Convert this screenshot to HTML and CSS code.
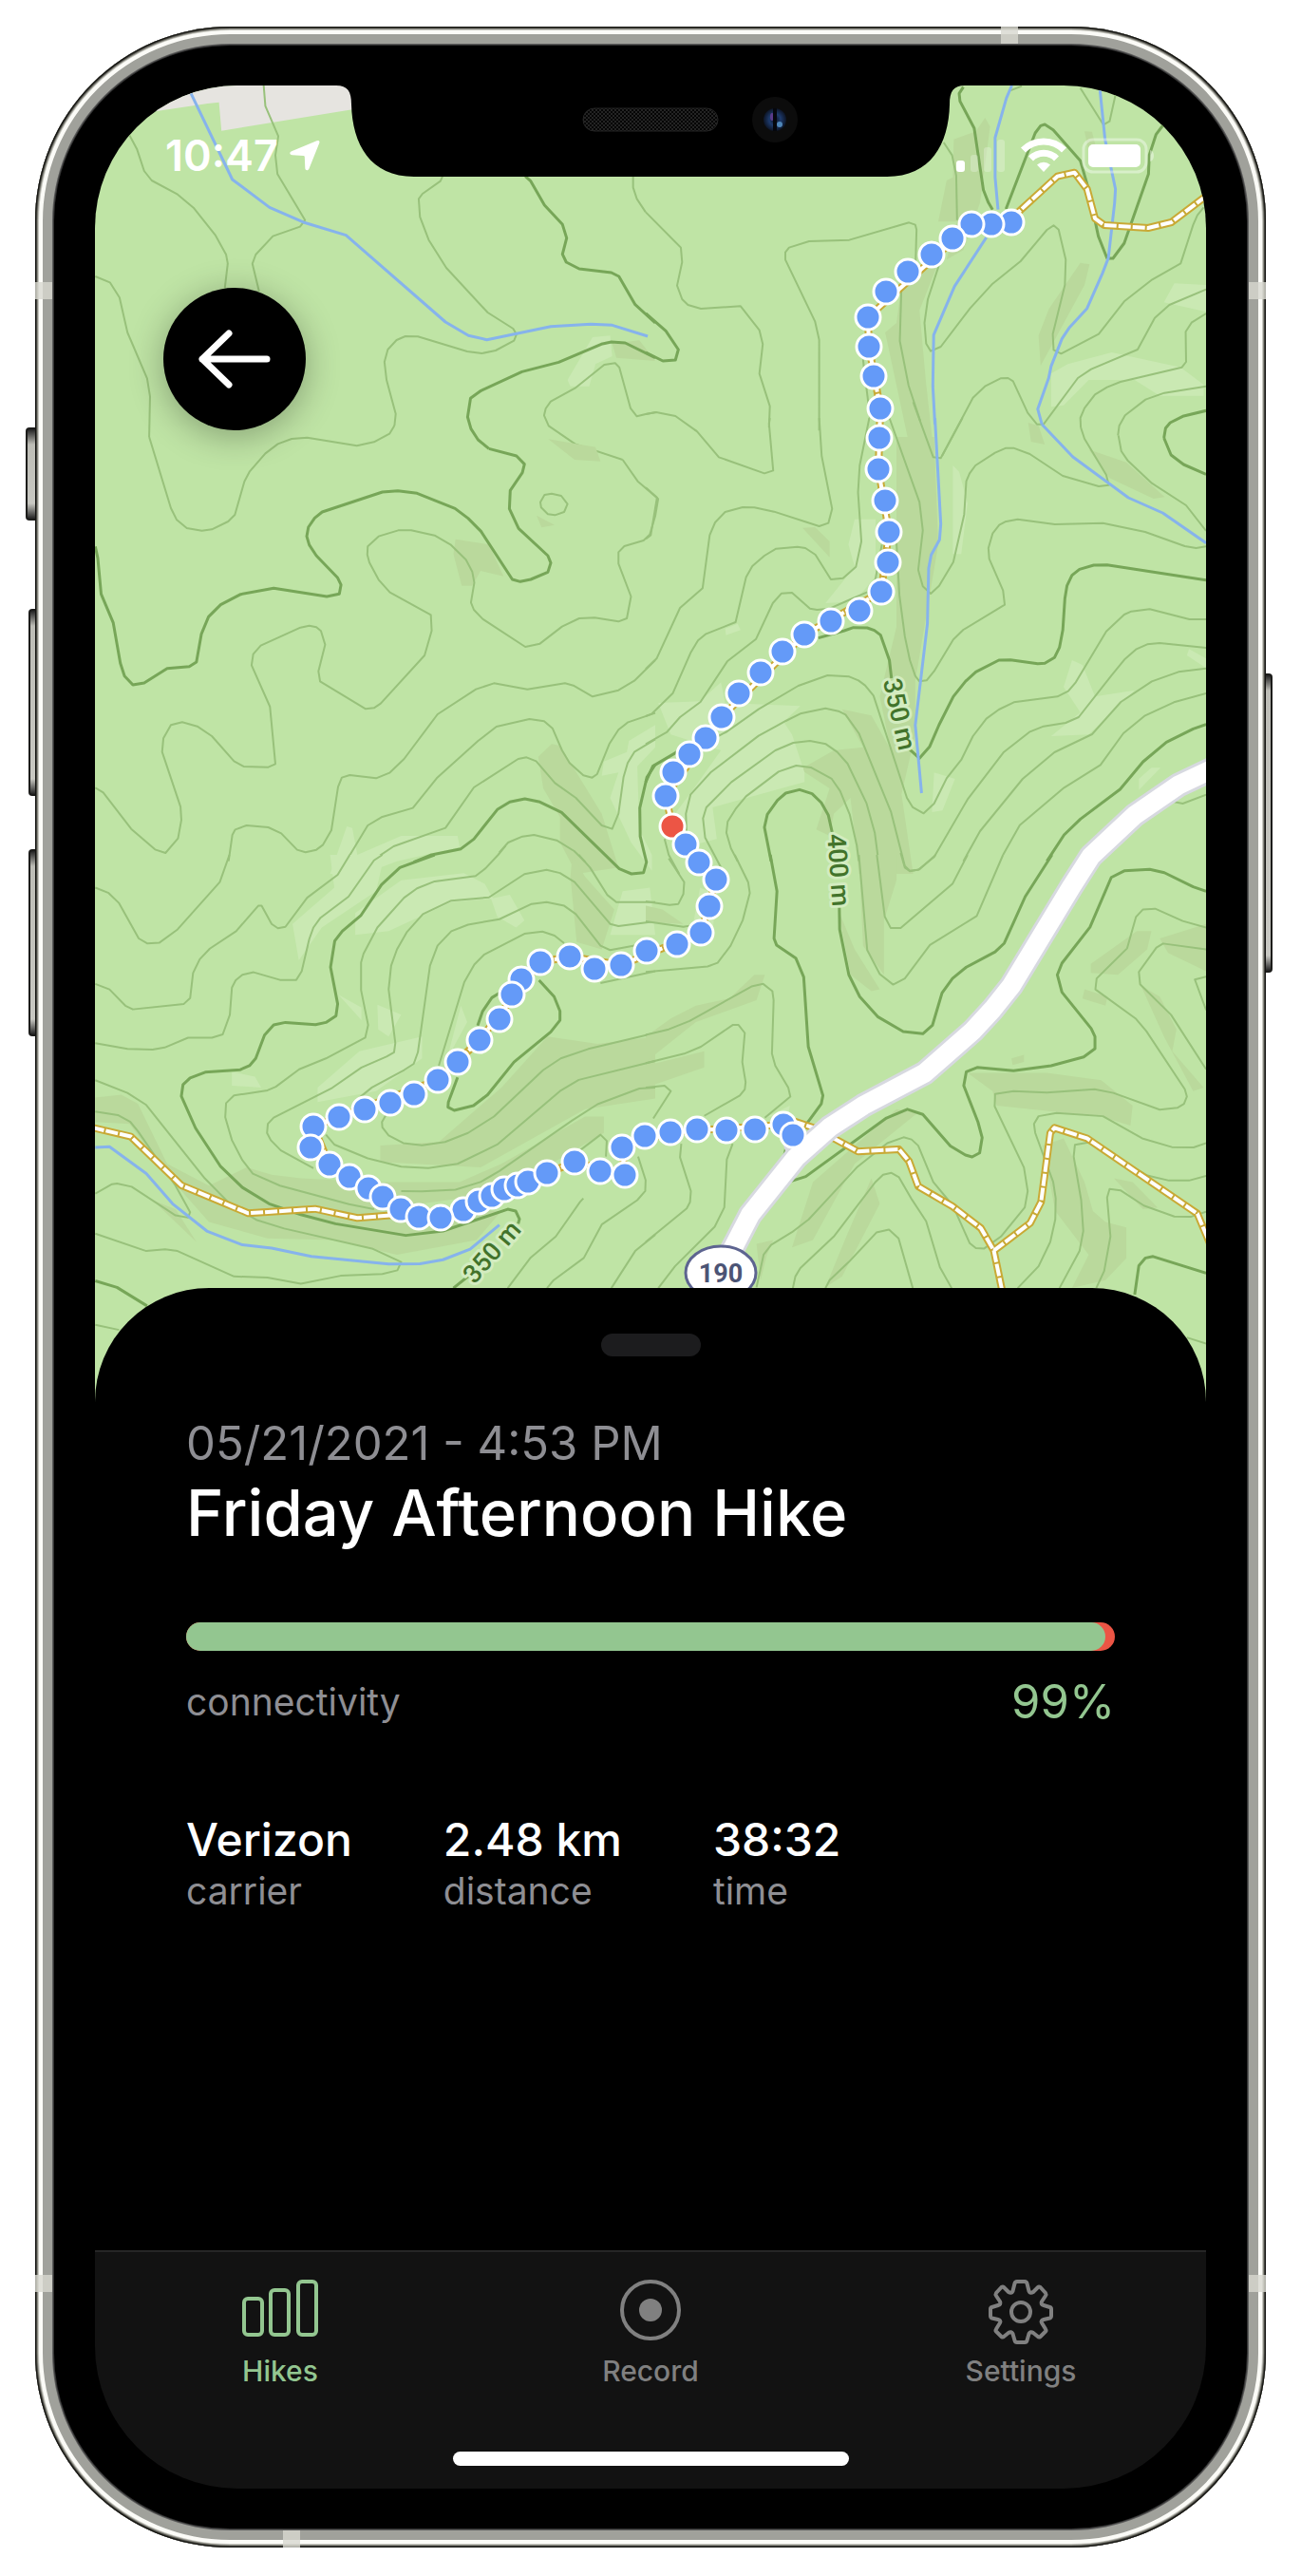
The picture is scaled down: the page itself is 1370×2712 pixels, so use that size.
FILE: index.html
```html
<!DOCTYPE html>
<html lang="en">
<head>
<meta charset="utf-8">
<meta name="viewport" content="width=device-width, initial-scale=1">
<title>Friday Afternoon Hike</title>
<link rel="stylesheet" href="styles.css">
</head>
<body>
<main class="phone">
  <span class="side-button side-button-mute"></span>
  <span class="side-button side-button-up"></span>
  <span class="side-button side-button-down"></span>
  <span class="side-button side-button-power"></span>
  <span class="band band-left-top"></span>
  <span class="band band-left-bottom"></span>
  <span class="band band-right-top"></span>
  <span class="band band-right-bottom"></span>
  <span class="band band-top"></span>
  <span class="band band-bottom"></span>

  <div class="screen">
    <header class="status-bar">
      <div class="status-time">
        <time>10:47</time>
        <svg width="32" height="34" viewBox="0 0 32 34" aria-label="Location in use"><path fill="#fff" d="M28.500 1.300C30.500 .2 32 1.500 31.300 3.600L20.500 30.500C19.500 33 16.500 32.800 16.300 30L15.800 18.200Q15.700 17.200 14.700 17.100L3 16.300C-.2 16 -.6 13.300 2 12.200Z"/></svg>
      </div>
      <svg class="notch" width="662" height="96" viewBox="0 0 662 96" aria-hidden="true">
        <defs>
          <pattern id="mesh" width="4" height="4" patternUnits="userSpaceOnUse"><rect width="4" height="4" fill="#050505"/><path d="M0 0L2 2L4 0M0 4L2 2L4 4" stroke="#242424" fill="none"/></pattern>
          <radialGradient id="lens"><stop offset="0" stop-color="#0b1020"/><stop offset=".5" stop-color="#1d3a6c"/><stop offset="1" stop-color="#0d1526"/></radialGradient>
        </defs>
        <path d="M0 0C12 0 16 6 16 20C17 62 36 96 82 96H580C626 96 645 62 646 20C646 6 650 0 662 0Z"/>
        <rect x="260" y="24" width="142" height="24" rx="12" fill="url(#mesh)" stroke="#252525"/>
        <circle cx="462" cy="36" r="24" fill="#0c0c0c"/>
        <circle cx="462" cy="36" r="12" fill="url(#lens)"/>
        <ellipse cx="459" cy="33" rx="2" ry="4" fill="#5a3a8a"/>
        <circle cx="467" cy="41" r="3" fill="#4f86b8"/>
        <path d="M462 24V48" stroke="#05070d" stroke-width="4"/>
      </svg>
      <svg class="status-icons" width="209" height="38" viewBox="0 0 209 38" aria-label="Signal, Wi-Fi, battery">
        <g fill="#fff">
          <rect y="24" width="9" height="12" rx="3"/>
          <g opacity=".25"><rect x="15" y="18" width="8" height="18" rx="3"/><rect x="29" y="10" width="8" height="26" rx="3"/><rect x="43" y="2" width="8" height="34" rx="3"/></g>
          <path d="M92 36L85 28.500A10 10 0 0 1 99 28.500Z"/>
          <rect x="139" y="7" width="55" height="24" rx="5"/>
          <path d="M204 13Q208 14 208 19Q208 24 204 25Z" opacity=".4"/>
        </g>
        <g fill="none" stroke="#fff">
          <path d="M70.500 13A30 30 0 0 1 113.500 13" stroke-width="7"/>
          <path d="M78.500 22A19 19 0 0 1 105.500 22" stroke-width="7"/>
          <rect x="134" y="2" width="66" height="34" rx="10" stroke-width="3" opacity=".4"/>
        </g>
      </svg>
    </header>

    <button class="back" type="button" aria-label="Back">
      <svg width="78" height="64" viewBox="0 0 78 64" fill="none" stroke="#fff" stroke-width="7" stroke-linecap="round" stroke-linejoin="round"><path d="M5 32H73M33 5L5 32L33 59"/></svg>
    </button>

    <svg class="map" viewBox="0 0 1170 1386" role="img" aria-label="Topographic map with the recorded route">
      <rect width="1170" height="1386" fill="#bfe4a5"/>

      <!-- north-west tile -->
      <g transform="translate(-100 -90) scale(.44005 .33333)">
        <path class="land" d="M340 358L497 327 524 323 530 413 850 344 850 260 340 260Z"/>
        <path class="lit" d="M1418 1065L1460 1060 1465 1125 1425 1150 1410 1220 1365 1220 1358 1200Z"/>
        <path class="shade" d="M1465 1085L1530 1075 1568 1140 1475 1130Z"/>
        <path class="minor" d="M307 420L328 472 345 540 363 570 425 614 463 656 515 742 541 804 545 832 538 910M631 270L635 335 666 430 659 490 664 550 730 695 718 716 653 746 612 804 604 833 620 920M228 873L263 892 286 940 305 1050 352 1195 359 1252 357 1380M1059 557L1054 572 1011 612 1002 628 1005 685 1026 758 1068 846 1167 987 1228 1038 1236 1056 1230 1076 1186 1107 1153 1116 1118 1110 1000 1063 970 1062 949 1074 928 1104 920 1143 925 1200 947 1307 944 1344M1515 557L1515 592 1524 628 1545 670M1570 1302L1545 1308 1524 1315 1509 1290 1482 1160 1472 1147 1446 1152 1376 1226 1318 1268 1306 1290 1302 1312 1313 1345 1376 1402 1490 1452"/>
        <path class="index" d="M1257 557L1270 572 1303 648 1346 709 1356 752 1346 803 1355 828 1386 849 1463 861 1481 873 1520 962 1568 1020M1568 1130L1496 1083 1463 1080 1439 1087 1337 1144 1249 1174 1151 1234 1126 1258 1119 1317 1127 1354 1144 1389 1170 1417"/>
        <path class="water" d="M457 295L556 567 645 655 726 702 828 743 1066 1017 1121 1060 1165 1073 1318 1031 1414 1024 1465 1027 1550 1062"/>
      </g>

      <!-- north-east tile -->
      <g transform="translate(580 -90) scale(.44005 .33333)">
        <path class="shade" d="M737 440L790 415 812 372 824 400 800 640 760 790 720 820 745 700 700 700 720 570 735 560ZM612 900L700 830 655 980 670 1200 690 1440 605 1440 628 1390 573 1050 600 1020ZM940 1060L965 975 1040 830 1062 835 1050 900 945 1155ZM915 1335L940 1345 955 1404 922 1395ZM1050 415L1068 416 1080 480 1060 480Z"/>
        <path class="lit" d="M970 1180L1010 1150 1115 1113 1280 1160 1335 1215 1335 1250 1230 1250 1170 1200 1060 1200 1000 1280 970 1285ZM1265 895L1341 900 1341 985 1240 955Z"/>
        <path class="minor" d="M0 670L84 782 87 828 75 902 87 945 101 963 132 975 227 967 272 1043 280 1087 272 1180 297 1283 295 1350M120 1360L71 1314 25 1302 0 1308M713 450L733 490 743 555 745 695M706 820L675 945 667 1020 671 1085 682 1109 706 1095 776 974 830 896 897 825 960 726 976 712 988 725 1005 820 1003 900 974 1055 976 1105 994 1117 1084 1055 1145 952 1212 883 1280 832 1310 710 1320 680 1335 655M612 900L608 1077 629 1218 657 1330M415 1360L415 1073 405 1015 334 820 334 797 343 782 391 762 487 758 630 703 645 710 648 725 645 860M709 1440L783 1256 813 1219 849 1195 867 1194 879 1204 914 1304 936 1340 952 1340 1034 1194 1066 1166 1177 1104 1218 1004 1253 963 1341 914M570 1290L583 1320M520 1135L522 1160 537 1320M1041 1350L1040 1320 1050 1289 1075 1246 1104 1223 1136 1206 1283 1160 1293 1143 1292 1048 1306 1019 1341 990M1341 1220L1241 1241 1196 1262 1147 1312 1133 1345 1130 1375M872 286L900 272M1040 278L1095 394 1110 383 1124 300"/>
        <path class="index" d="M0 990L48 1045 78 1104 71 1137 41 1140 0 1113M1341 1297L1285 1315 1255 1335 1244 1352 1240 1383M760 275L750 295 752 320 786 405 808 600 820 640 830 662M862 660L932 420 945 397 955 393 975 410 1040 508 1058 590 1083 746 1104 816 1118 816 1145 768 1203 550 1205 490 1221 425 1241 390"/>
        <path class="water" d="M876 270L863 310 836 435 836 560 843 662M815 750L739 904 689 1058 687 1220 692 1340M1087 285L1099 440 1124 597 1122 640 1107 815 1093 863 1056 974 1013 1036 996 1070 970 1157 964 1195 938 1292 948 1340"/>
        <path class="track" d="M875 690L985 557 1026 545 1056 597 1075 690 1097 711 1202 720 1258 702 1345 615"/>
        <path class="track-dash" d="M875 690L985 557 1026 545 1056 597 1075 690 1097 711 1202 720 1258 702 1345 615"/>
      </g>

      <!-- west tile -->
      <g transform="translate(-100 350) scale(.44005 .33333)">
        <path class="shade" d="M1288 1070L1320 1030 1340 1035 1440 1250 1480 1420 1380 1440 1340 1340 1340 1260 1300 1170ZM1090 383L1170 400 1205 500 1150 483 1130 530 1105 530 1085 430ZM1312 67L1425 92 1437 137 1375 132ZM1284 308L1327 338 1296 346Z"/>
        <path class="lit" d="M1505 1020L1568 970 1568 1040 1525 1100 1530 1300 1560 1380 1560 1430 1510 1340 1460 1200 1480 1120 1440 1130 1445 1085 1500 1055ZM830 1290L843 1295 855 1380 960 1320 1095 1320 1100 1355 950 1400 870 1440 790 1440Z"/>
        <path class="minor" d="M357 60L409 285 423 322 447 348 483 356 507 352 546 327 562 306 585 200 597 170 635 112 665 82 698 66 735 62 854 88 895 76 932 50 944 24M1490 132L1526 200 1575 256 1568 310 1555 368 1540 387 1494 405 1480 424 1480 460 1510 564 1500 633 1480 643 1423 631 1386 633 1345 659 1292 713 1257 723 1155 635 1134 606 1127 583 1135 520 1130 485 1115 448 1078 400 1040 371 984 355 953 355 906 374 880 406 879 432 884 457 906 511 933 551 1031 622 1033 672 1016 750 911 902 895 916 875 919 766 832 762 800 778 716 768 673 757 661 740 656 719 662 624 719 606 746 602 781 646 912 659 1093 642 1103 583 1101 560 1084 507 1005 472 974 436 961 409 970 391 1012 388 1055 432 1228 434 1270 426 1328 396 1374 371 1363 314 1298 247 1183 228 1168M1320 239L1343 246 1358 272 1350 297 1328 307 1311 304 1295 283 1293 266 1303 243ZM1568 765L1518 830 1480 860 1418 880 1372 845 1352 838 1262 857 1182 838 1139 857 1047 936 967 1077 932 1121 900 1138 837 1128 818 1136 809 1165 793 1302 773 1348 757 1364 731 1372 711 1364 673 1312 642 1293 590 1287 563 1300 556 1317 547 1400M1568 932L1503 961 1480 985 1458 1030 1429 1125 1417 1136 1396 1129 1363 1090 1345 1050 1322 980 1302 958 1267 951 1188 975 1144 1020 1045 1138 988 1232 913 1261 880 1287 833 1390M1568 1015L1518 1055 1502 1090 1492 1135 1480 1250 1465 1298 1440 1287 1378 1200 1328 1153 1283 1084 1260 1072 1240 1077 1134 1167 1066 1295 942 1353 900 1390M1195 1372L1216 1341 1250 1322 1278 1317 1332 1334 1374 1368 1400 1402"/>
        <path class="index" d="M1170 97L1236 120 1255 146 1250 173 1221 229 1219 287 1241 349 1311 435 1318 458 1311 487 1270 510 1245 517 1226 510 1151 358 1120 317 1089 286 998 238 952 230 915 234 771 297 753 316 738 345 734 374 740 401 757 435 808 505 816 527 812 556 782 564 655 538 576 557 528 590 499 628 482 682 470 771 453 785 400 791 345 837 318 843 298 815 288 775 271 647 242 556 234 443 228 406M1568 1095L1548 1135 1531 1232 1532 1322 1547 1403 1540 1436 1511 1440 1482 1424 1344 1246 1292 1213 1256 1203 1220 1213 1190 1237 1134 1330 1103 1361 1030 1381 990 1403"/>
      </g>

      <!-- east tile -->
      <g transform="translate(580 350) scale(.44005 .33333)">
        <path class="shade" d="M600 60L690 60 700 400 645 830 645 1000 610 1200 560 880 600 660 600 560ZM1060 100L1150 140 1242 250 1215 255 1110 190ZM375 347L405 345 440 390 440 440ZM470 920L540 940 600 1080 640 1440 510 1440 490 1200 450 1250 440 1320 408 1300 440 1170 370 1110 450 1050 520 1040Z"/>
        <path class="lit" d="M485 400L500 320 550 320 550 500 500 580 430 585 500 470ZM735 150L750 170 770 270 755 430 735 430ZM1000 850L1020 765 1045 780 1075 880 1170 860 1060 1000 970 1005 1040 930ZM30 900L130 895 180 835 190 900 370 910 330 960 350 1000 380 1120 380 1150 160 1230 170 1330 110 1350 70 1250 110 1180 180 1050 60 1000ZM690 1120L740 1140 710 1240 685 1245ZM1300 730L1341 760 1341 790 1295 750ZM1180 1140L1210 1105 1232 1105 1180 1175ZM190 665L220 650 227 670 192 686Z"/>
        <path class="minor" d="M297 0L295 18 305 166 284 175 175 124 123 43 118 38M0 220L27 251 12 370 0 382M640 -50L688 124 706 127 758 0M583 0L655 266 663 355 652 480 663 532 682 555 702 530 736 455 762 305 767 200 775 175 789 150 836 110 862 95 880 95 919 114 998 183 1084 216 1108 212 1102 180 1050 66 1041 30M535 0L512 150 508 235 516 390 503 470 472 506 443 510 406 432 382 411 363 407 312 413 284 435 255 468 240 503 215 645 143 683 125 703 108 740 65 869 15 934 0 942M1131 55L1138 105 1153 134 1211 206 1293 276 1341 357M415 0L421 120 446 287 437 332 415 342 307 296 260 283 232 282 190 297 166 330 153 370 136 538 82 600 26 760 0 793M530 550L490 573 440 602 410 606 393 602 350 552 325 554 304 585 264 698 195 769 131 897 82 945 50 993 0 1030M565 400L548 520M600 395L607 560 620 690 632 765 645 815 655 832 672 829 690 800 736 700 760 669 859 590 855 545 822 445 820 411 830 365 846 338 860 328 890 320 979 336 1094 332 1195 360 1290 405 1317 411 1341 406M1341 636L1301 636 1206 604 1162 611 1145 621 1102 674 1029 835 1011 863 985 880 881 898 845 921 815 950 783 1005 755 1080 720 1138 690 1218 665 1249 639 1230 625 1200 545 877 525 845 509 829 487 817 435 813 365 846 270 920 195 990 125 1040 80 1095 55 1150M1341 726L1230 711 1200 715 1173 731 1147 761 1114 814 1036 945 1005 963 952 974 918 992 857 1055 770 1205 690 1387 652 1427 632 1430 620 1415 587 1245 510 996 478 937 461 926 430 917 370 934 335 957 270 1004 155 1120 107 1190 96 1250 98 1320M1341 791L1275 802 1211 832 1137 897 1068 999 978 1056 902 1140 800 1305 760 1400M557 1400L548 1310 528 1216 483 1092 458 1055 431 1030 393 1020 353 1026 310 1050 205 1150 145 1230 137 1265 142 1325 180 1420M1341 870L1264 898 1195 940 1143 996 1088 1096 1001 1168 895 1286 855 1380M510 1400L505 1350 488 1252 465 1178 445 1140 395 1104 360 1098 318 1117 240 1195 215 1235 196 1275 193 1310 204 1360 220 1400M1265 1213L1285 1218 1341 1190M45 1330L55 1380 80 1440"/>
        <path class="index" d="M1240 63L1257 117 1287 147 1341 178M413 695L475 672 497 662 530 663 547 671 562 686 583 765 588 822M630 1045L655 1075 679 1039 702 969 736 880 765 832 790 802 845 765 873 764 938 776 955 775 978 757 990 725 998 670 1003 570 1008 530 1020 497 1038 478 1072 465 1104 464 1341 512M0 1150L17 1100 75 1055M1341 968L1310 982 1246 1024 1190 1086 1135 1173 1040 1267 1001 1317 960 1400M448 1320L437 1255 420 1215 398 1187 368 1174 335 1185 315 1208 291 1252 284 1293 300 1400"/>
        <path class="water" d="M692 0L706 335 703 385 683 433 677 475 674 650 645 970 660 1185M948 20L1022 123 1155 252 1237 300 1341 395"/>
      </g>

      <!-- south-west tile -->
      <g transform="translate(-100 810) scale(.44005 .38265)">
        <path class="shade" d="M228 668L290 660 330 685 400 850 500 910 590 860 650 880 720 890 900 900 1100 900 1200 850 1400 720 1445 720 1445 765 1200 930 940 970 1200 980 1140 1060 950 1100 800 1060 640 1055 500 1010 400 880 310 740 228 735ZM910 800L1050 790 1200 640 1310 500 1430 520 1568 500 1568 670 1400 700 1150 860 910 845ZM1370 0L1400 60 1470 150 1440 260 1380 240 1365 60ZM365 950L420 975 470 1065Z"/>
        <path class="lit" d="M790 0L920 0 900 100 770 200 715 290 700 190 800 90ZM850 160L960 70 1110 50 1160 80 1180 120 1080 130 930 210 850 220ZM760 640L860 540 1010 500 1010 560 900 650 760 680ZM1490 100L1555 90 1568 220 1460 220ZM810 385L865 420 865 455ZM903 412L960 440 930 500 905 480ZM1175 120L1220 110 1255 180 1235 200 1190 170ZM555 597L610 610 625 640 555 635ZM1103 415L1118 460 1080 540 1070 560Z"/>
        <path class="minor" d="M549 0L526 75 425 205 381 242 353 244 332 230 285 133 260 105 228 90M837 0L808 55 735 118 683 198 665 202 650 190 626 140 618 140 565 210 502 258 478 287 462 325 455 394 440 410 318 425 300 415 262 370 228 355M915 0L895 15 834 115 767 173 750 200 740 232 722 320 709 344 670 344 607 323 580 330 564 345 555 365 550 440 533 494 507 503 450 503 394 530 365 536 305 534 228 518M1210 -25L1192 0 1162 37 1138 58 1040 73 998 92 967 118 903 200 870 272 864 296 864 372 881 468 874 503 780 560 716 590 660 638 640 648 560 662 541 683 539 722 555 785 580 840 605 877 670 910 835 961 895 975M1385 0L1412 35 1453 110 1475 130 1568 130M1568 183L1480 196 1460 190 1375 75 1340 50 1308 41 1255 53 1170 117 1080 126 1012 163 974 212 950 260 936 305 930 370 946 518 943 543 925 555 865 585 795 641 655 723 641 740 639 765 648 785 672 813 750 862M1540 245L1460 262 1437 250 1378 163 1350 140 1308 130 1272 135 1195 177 1120 192 1080 210 1047 250 1029 305 1000 543 990 575 967 592 890 640 860 668M1350 243L1327 222 1298 211 1255 217 1158 275 1135 302 1111 350 1050 580M1568 490L1408 534 1342 560 1300 592 1182 720 1120 765 1065 790 1010 799 965 793 930 772 915 750 914 735 924 715M1568 567L1385 619 1340 650 1190 797 1095 850 1025 862 960 858 880 835 800 797 780 770M1568 640L1530 643 1430 686 1370 730 1195 870 1150 900 1090 921 1010 926 960 925M228 620L305 655 350 688 490 890 550 960 615 1005 680 1028 890 1083 960 1120 951 1143 915 1153 815 1158 720 1180 640 1163 560 1160 425 1090 395 1085 350 1090 228 1042M228 706L282 716 312 735 330 760 420 910 455 983 450 998 420 992 315 913 280 904 268 906 228 932M228 1293L285 1307M1396 945L1388 955 1330 1050 1270 1108 1215 1192M1527 830L1545 895 1544 925 1525 950 1440 1017 1397 1109 1325 1170 1309 1192M1568 1045L1520 1090 1463 1192M1340 855L1437 770 1452 787 1450 830M1568 320L1437 353"/>
        <path class="index" d="M1040 0L957 35 913 82 864 166 819 210 801 237 791 309 808 410 804 443 780 461 755 467 683 461 655 468 633 496 612 560 597 580 575 591 491 598 455 614 438 632 434 664 468 752 527 856 580 915 644 960 720 990 803 1015 971 1047 1060 1035 1215 975 1234 980 1243 1002 1240 1015M1143 470L1155 430 1177 393 1195 380M1290 345L1326 390 1340 430 1340 455 1318 487 1230 570 1167 660 1133 690 1087 703 1072 694 1073 680 1095 612M228 1172L280 1190 352 1241M1085 1192L1125 1155"/>
        <path class="water" d="M228 805L262 803 350 877 413 960 495 1035 580 1073 650 1082 745 1105 930 1126 1005 1125 1060 1114 1125 1085 1195 1018"/>
        <path class="track" d="M220 750L313 775 434 909 594 986 754 974 855 999 940 991"/>
        <path class="track-dash" d="M220 750L313 775 434 909 594 986 754 974 855 999 940 991"/>
      </g>

      <!-- south-east tile -->
      <g transform="translate(580 810) scale(.44005 .38265)">
        <path class="shade" d="M0 500L60 450 120 415 200 395 260 330 285 330 265 400 120 460 0 570ZM0 580L140 540 140 585 0 640ZM400 900L600 700 650 710 500 850 400 1060 350 1080ZM540 890L560 960 470 1160 430 1190 480 1050ZM460 150L500 260 560 370 540 375 490 330ZM510 0L600 0 600 70 570 180 570 330 520 250ZM770 600L960 600 1090 620 1165 690 1160 745 1090 720 840 690 830 650ZM950 800L1000 780 1050 900 1070 980 1100 1010 1150 1025 1150 1110 1100 1170 1020 1192 1060 1100 980 980ZM1065 300L1175 210 1210 210 1200 260 1130 330 1065 325ZM1230 230L1341 190 1341 320 1250 270ZM1185 360L1230 390 1270 480 1260 540 1335 640 1310 650 1240 500ZM1050 370L1105 390 1100 415 1045 395ZM875 560L905 550 905 570 878 578ZM0 140L40 150 90 190 0 185ZM265 1070L305 1060 290 1100 275 1170ZM1120 890L1165 900 1225 970 1190 975Z"/>
        <path class="lit" d="M130 90L170 110 160 210 110 210ZM290 720L345 690 340 720Z"/>
        <path class="minor" d="M770 0L734 80 610 201 586 201 572 170 553 0M855 0L792 168 680 248 620 340 592 357 560 328 530 262 510 0M213 0L245 75 249 105 232 180 203 250 172 297 148 307 0 322M610 -5L620 35 632 45 655 40 694 0M1341 200L1285 182 1219 148 1190 150 1173 171 1152 257 1079 340 1076 370 1172 450 1198 485 1290 645 1295 665 1288 685 1272 696 1230 701 1119 655 1074 645 960 654 880 650 836 658 835 692 905 860 914 925 907 970 850 1050 810 1083 790 1082 775 1068 735 965 688 900 652 800 636 783 617 777 578 793 505 860 390 1003 350 1038 300 1073 282 1100 265 1190M1341 260L1238 244 1222 255 1180 322 1183 356 1257 440 1341 590M1341 335L1314 343 1341 427M1341 793L1311 805 1259 804 1188 780 1094 719 983 710 940 719 929 740 932 765 975 900 981 945 980 1003 968 1065 940 1132 890 1192M1341 883L1300 896 1252 896 1200 882 1066 790 1027 798 1024 830 1042 950 1047 1035 1038 1090 990 1192M1341 982L1304 996 1265 995 1192 965 1136 923 1110 919 1104 943 1112 1050 1097 1145 1078 1192M352 1192L358 1160 370 1137 450 1050 549 901 568 880 588 875 606 887 635 945 671 1008 704 1135 732 1192M430 1192L440 1170 486 1120 552 1039 582 1031 605 1055 639 1192M1295 1328L1341 1345M0 495L55 480 105 457 253 362 281 355 303 375 306 400 302 547 310 580 341 640 346 665 285 723M0 573L92 547 132 528 208 468 222 468 237 490 231 570 239 625 237 645 225 662 140 718M0 640L45 635 60 650 18 725M85 795L82 832 108 925 106 955 98 973 0 1065M208 795L194 838 188 970 165 1023 70 1132 30 1192M55 10L92 75 90 108 78 135 57 138 0 128M0 183L90 198 105 195"/>
        <path class="index" d="M972 0L908 115 858 243 836 267 767 309 734 340 709 380 686 469 663 492 616 486 556 446 512 390 486 330 464 205 463 130M298 0L314 100 307 230 313 248 359 284 378 336 389 528 424 662 420 685 385 740M335 810L330 835M1341 100L1310 88 1241 49 1206 40 1145 44 1114 62 1063 199 996 298 985 330 996 378 1066 478 1075 500 1075 533 1048 556 970 580 880 594 793 585 767 597 761 635 795 735 805 778 799 820 781 831 765 826 729 801 663 714 626 700 576 724 383 885 347 898M1170 1210L1180 1130 1196 1109 1214 1105 1341 1151"/>
        <path class="track" d="M352 732L405 752 508 816 606 810 630 843 652 912 734 967 802 1027 833 1089 853 1200M833 1089L920 1013 946 955 968 765 978 751 1056 780 1320 987 1350 1070"/>
        <path class="track-dash" d="M352 732L405 752 508 816 606 810 630 843 652 912 734 967 802 1027 833 1089 853 1200M833 1089L920 1013 946 955 968 765 978 751 1056 780 1320 987 1350 1070"/>
        <path class="road-edge" d="M1370 -244L1275 -192 1170 -109 1065 4 1020 85 875 360 830 425 782 485 668 600 520 690 440 750 360 832 250 990 205 1090M352 770L370 830"/>
        <path class="road" d="M1370 -244L1275 -192 1170 -109 1065 4 1020 85 875 360 830 425 782 485 668 600 520 690 440 750 360 832 250 990 205 1090"/>
      </g>

      <g class="elevation">
        <text transform="translate(847 662) rotate(77)">350 m</text>
        <text transform="translate(783 826) rotate(86)">400 m</text>
        <text transform="translate(418 1228) rotate(-49)">350 m</text>
      </g>
      <ellipse cx="659" cy="1250" rx="37" ry="28" fill="#fff" stroke="#5d6490" stroke-width="3"/>
      <text class="shield" x="659" y="1260">190</text>

      <path class="track" d="M965 144L923 146 814 244 815 275 827 340 825 404 836 470 828 533 747 578 660 665 601 748 608 780 654 836 638 892 554 926 500 917 469 923 405 1005 361 1047 230 1096 247 1136 341 1191 388 1184 505 1133 558 1147 555 1118 606 1102 725 1094"/>
      <path class="track-dash" d="M965 144L923 146 814 244 815 275 827 340 825 404 836 470 828 533 747 578 660 665 601 748 608 780 654 836 638 892 554 926 500 917 469 923 405 1005 361 1047 230 1096 247 1136 341 1191 388 1184 505 1133 558 1147 555 1118 606 1102 725 1094"/>
      <g class="route">
        <circle cx="965" cy="144" r="13"/><circle cx="944" cy="146" r="13"/><circle cx="923" cy="146" r="13"/><circle cx="903" cy="161" r="13"/><circle cx="881" cy="178" r="13"/><circle cx="856" cy="196" r="13"/><circle cx="833" cy="217" r="13"/><circle cx="814" cy="244" r="13"/><circle cx="815" cy="275" r="13"/><circle cx="820" cy="306" r="13"/><circle cx="827" cy="340" r="13"/><circle cx="826" cy="371" r="13"/>
        <circle cx="825" cy="404" r="13"/><circle cx="832" cy="437" r="13"/><circle cx="836" cy="470" r="13"/><circle cx="835" cy="502" r="13"/><circle cx="828" cy="533" r="13"/><circle cx="805" cy="553" r="13"/><circle cx="775" cy="564" r="13"/><circle cx="747" cy="578" r="13"/><circle cx="724" cy="596" r="13"/><circle cx="701" cy="618" r="13"/><circle cx="678" cy="640" r="13"/><circle cx="660" cy="665" r="13"/><circle cx="643" cy="687" r="13"/><circle cx="626" cy="704" r="13"/><circle cx="609" cy="723" r="13"/><circle cx="601" cy="748" r="13"/>
        <circle class="lost" cx="608" cy="780" r="13"/>
        <circle cx="622" cy="799" r="13"/><circle cx="636" cy="818" r="13"/><circle cx="654" cy="836" r="13"/><circle cx="647" cy="864" r="13"/><circle cx="638" cy="892" r="13"/><circle cx="613" cy="904" r="13"/><circle cx="581" cy="911" r="13"/><circle cx="554" cy="926" r="13"/><circle cx="526" cy="930" r="13"/><circle cx="500" cy="917" r="13"/><circle cx="469" cy="923" r="13"/><circle cx="449" cy="941" r="13"/><circle cx="439" cy="957" r="13"/><circle cx="426" cy="983" r="13"/><circle cx="405" cy="1005" r="13"/><circle cx="382" cy="1028" r="13"/><circle cx="361" cy="1047" r="13"/><circle cx="336" cy="1062" r="13"/><circle cx="311" cy="1071" r="13"/><circle cx="284" cy="1078" r="13"/><circle cx="257" cy="1086" r="13"/><circle cx="230" cy="1096" r="13"/>
        <circle cx="227" cy="1118" r="13"/><circle cx="247" cy="1136" r="13"/><circle cx="268" cy="1149" r="13"/><circle cx="288" cy="1161" r="13"/><circle cx="303" cy="1170" r="13"/><circle cx="322" cy="1183" r="13"/><circle cx="341" cy="1191" r="13"/><circle cx="388" cy="1184" r="13"/><circle cx="364" cy="1192" r="13"/><circle cx="404" cy="1175" r="13"/><circle cx="418" cy="1169" r="13"/><circle cx="431" cy="1162" r="13"/><circle cx="445" cy="1158" r="13"/><circle cx="456" cy="1154" r="13"/><circle cx="476" cy="1145" r="13"/><circle cx="505" cy="1133" r="13"/><circle cx="532" cy="1143" r="13"/><circle cx="555" cy="1118" r="13"/><circle cx="558" cy="1147" r="13"/><circle cx="579" cy="1106" r="13"/><circle cx="606" cy="1102" r="13"/><circle cx="634" cy="1099" r="13"/><circle cx="665" cy="1100" r="13"/><circle cx="695" cy="1099" r="13"/><circle cx="725" cy="1094" r="13"/><circle cx="735" cy="1105" r="13"/>
      </g>
    </svg>

    <section class="sheet">
      <div class="grabber"></div>
      <p class="date">05/21/2021 - 4:53 PM</p>
      <h1 class="title">Friday Afternoon Hike</h1>
      <div class="meter" role="meter" aria-labelledby="connectivity" aria-valuemin="0" aria-valuemax="100" aria-valuenow="99"><div class="meter-fill" style="width: 99%"></div></div>
      <div class="meter-caption"><span id="connectivity" class="label">connectivity</span><span class="percent">99%</span></div>
      <dl class="stats">
        <div class="stat"><dt class="label">carrier</dt><dd>Verizon</dd></div>
        <div class="stat"><dt class="label">distance</dt><dd>2.48 km</dd></div>
        <div class="stat"><dt class="label">time</dt><dd>38:32</dd></div>
      </dl>
    </section>

    <nav class="tabs">
      <a class="tab tab-active" href="#hikes">
        <svg width="82" height="70" viewBox="0 0 82 70"><rect x="3" y="21" width="19" height="38" rx="4"/><rect x="31" y="12" width="19" height="47" rx="4"/><rect x="60" y="3" width="19" height="56" rx="4"/></svg>
        <span>Hikes</span>
      </a>
      <a class="tab" href="#record">
        <svg width="70" height="70" viewBox="0 0 70 70"><circle cx="35" cy="33" r="30"/><circle cx="35" cy="33" r="12" fill="currentColor" stroke="none"/></svg>
        <span>Record</span>
      </a>
      <a class="tab" href="#settings">
        <svg width="70" height="70" viewBox="0 0 70 70" stroke-linejoin="round"><circle cx="35" cy="35" r="10"/><path d="M31 3H39Q41 3 41.500 5L43.500 13Q45 16 48 14L53 9Q54 8 55.500 9L61 15Q62 16.500 61 18L57 24Q55.500 27 59 28L65.500 30Q67 30.500 67 32V39Q67 41 65.500 41.500L59 43Q55.500 44 57 46.500L61 53Q62 54.500 61 55.500L55.500 61Q54 62 53 61L48 57Q45 55 43.500 58L41.500 65Q41 67 39 67H31Q29 67 28.500 65L26.500 58Q25 55 22 57L17 61Q16 62 14.500 61L9 55.500Q8 54.500 9 53L13 46.500Q14.500 44 11 43L4.500 41.500Q3 41 3 39V32Q3 30.500 4.500 30L11 28Q14.500 27 13 24L9 18Q8 16.500 9 15L14.500 9Q16 8 17 9L22 14Q25 16 26.500 13L28.500 5Q29 3 31 3Z"/></svg>
        <span>Settings</span>
      </a>
      <div class="home-indicator"></div>
    </nav>
  </div>
</main>
</body>
</html>
```
FILE: styles.css
```css
* { box-sizing: border-box; }

body {
  margin: 0;
  padding: 28px 37px;
  background: #fff;
  font-family: Inter, "Noto Sans", sans-serif;
  color: #fff;
}

/* Phone body */
.phone {
  position: relative;
  padding: 62px 63px;
  border-radius: 205px;
  background: #000;
  box-shadow:
    inset 0 0 0 1px #12120f,
    inset 0 0 0 2px #45453f,
    inset 0 0 0 3px #8a8a82,
    inset 0 0 0 4px #c9c9c2,
    inset 0 0 0 8px #fbfbf7,
    inset 0 0 0 18px #a0a19b,
    inset 0 0 0 19px #5a5a5a,
    inset 0 0 0 20px #333;
}

.side-button {
  position: absolute;
  left: -7px;
  width: 7px;
  border: 2px solid #1c1c1a;
  border-right: 0;
  border-radius: 4px 0 0 4px;
  background: linear-gradient(#222, #bdbdb6 16px, #c8c8c2 calc(100% - 16px), #222);
}
.side-button-mute { top: 422px; left: -10px; width: 10px; height: 98px; }
.side-button-up { top: 613px; height: 197px; }
.side-button-down { top: 866px; height: 197px; }
.side-button-power {
  top: 681px;
  right: -7px;
  left: auto;
  height: 315px;
  transform: scaleX(-1);
}

.band { position: absolute; background: #d8d8d0cc; }
.band-left-top, .band-left-bottom { left: 0; width: 18px; height: 18px; }
.band-right-top, .band-right-bottom { right: 0; width: 18px; height: 18px; }
.band-left-top, .band-right-top { top: 269px; }
.band-left-bottom, .band-right-bottom { bottom: 269px; }
.band-top { top: 0; right: 261px; width: 18px; height: 18px; }
.band-bottom { bottom: 0; left: 261px; width: 18px; height: 18px; }

.screen {
  position: relative;
  overflow: hidden;
  border-radius: 150px;
  background: #000;
}

/* Status bar */
.status-bar {
  position: absolute;
  top: 0;
  right: 0;
  left: 0;
  z-index: 2;
  display: grid;
  grid-template-columns: minmax(0, 1fr) auto minmax(0, 1fr);
}
.status-time {
  display: flex;
  gap: 12px;
  align-items: center;
  height: 148px;
  padding-left: 74px;
  font-size: 45px;
  font-weight: 600;
  line-height: 48px;
}
.status-time svg { flex: none; }
.status-icons {
  justify-self: end;
  margin-top: 55px;
  margin-right: 54px;
}

.back {
  position: absolute;
  top: 213px;
  left: 72px;
  z-index: 1;
  display: grid;
  place-items: center;
  width: 150px;
  height: 150px;
  padding: 0;
  border: 0;
  border-radius: 50%;
  background: #000;
  box-shadow: 0 6px 36px rgba(0, 0, 0, .3);
}

/* Map */
.map { display: block; width: 100%; height: auto; }
.map path { fill: none; stroke-linejoin: round; vector-effect: non-scaling-stroke; }
.map .land { fill: #e6e4e0; }
.map .shade { fill: #bad99c; }
.map .lit { fill: #cae9b3; }
.minor { stroke: #98c17b; stroke-width: 2px; }
.index { stroke: #77a658; stroke-width: 3px; }
.water { stroke: #86b3ec; stroke-width: 3px; }
.track { stroke: #c9a935; stroke-width: 8px; }
.track-dash { stroke: #fff; stroke-width: 4px; stroke-dasharray: 13px 2px; }
.road-edge { stroke: #d7d9e0; stroke-width: 26px; }
.road { stroke: #fff; stroke-width: 20px; }
.route circle { fill: #649af8; stroke: #fff; stroke-width: 3px; }
.route .lost { fill: #ec5545; }
.elevation text {
  fill: #42732b;
  stroke: #d3ecc0;
  stroke-width: 6px;
  stroke-linejoin: round;
  paint-order: stroke;
  font-family: Roboto, sans-serif;
  font-size: 27px;
  font-weight: 500;
  text-anchor: middle;
  dominant-baseline: central;
}
.shield {
  fill: #4c5475;
  font-family: Roboto, sans-serif;
  font-size: 27px;
  font-weight: 700;
  text-anchor: middle;
}

/* Details */
.sheet {
  position: relative;
  margin-top: -120px;
  padding: 48px 96px 354px;
  border-radius: 120px 120px 0 0;
  background: #000;
}
.grabber {
  width: 105px;
  height: 24px;
  margin: 0 auto 62px;
  border-radius: 12px;
  background: #1c1c1e;
}
.date {
  margin: 0;
  color: #8e8e93;
  font-size: 49px;
  line-height: 60px;
}
.title {
  margin: 0 0 72px;
  font-size: 67px;
  font-weight: 500;
  line-height: 86px;
}
.meter {
  height: 30px;
  border-radius: 15px;
  background: #ec5545;
}
.meter-fill {
  height: 30px;
  border-radius: 15px;
  background: #93c690;
}
.meter-caption {
  display: flex;
  justify-content: space-between;
  align-items: center;
  margin-top: 24px;
}
.label {
  color: #8e8e93;
  font-size: 39px;
  line-height: 48px;
}
.percent {
  color: #93c690;
  font-size: 49px;
  line-height: 60px;
}
.stats {
  display: flex;
  gap: 96px;
  margin: 85px 0 0;
}
.stat { display: flex; flex-direction: column-reverse; }
.stat dd {
  margin: 0;
  font-size: 48px;
  font-weight: 500;
  line-height: 60px;
}

/* Tab bar */
.tabs {
  display: grid;
  grid-template-columns: repeat(3, 1fr);
  row-gap: 68px;
  padding: 28px 0 24px;
  border-top: 2px solid #262626;
  background: #121212;
}
.tab {
  display: flex;
  flex-direction: column;
  align-items: center;
  gap: 10px;
  color: #808080;
  font-size: 30px;
  font-weight: 500;
  line-height: 34px;
  text-decoration: none;
}
.tab svg { fill: none; stroke: currentColor; stroke-width: 4px; }
.tab-active { color: #93c690; }
.home-indicator {
  grid-column: 1 / -1;
  justify-self: center;
  width: 417px;
  height: 15px;
  border-radius: 8px;
  background: #fff;
}
```
